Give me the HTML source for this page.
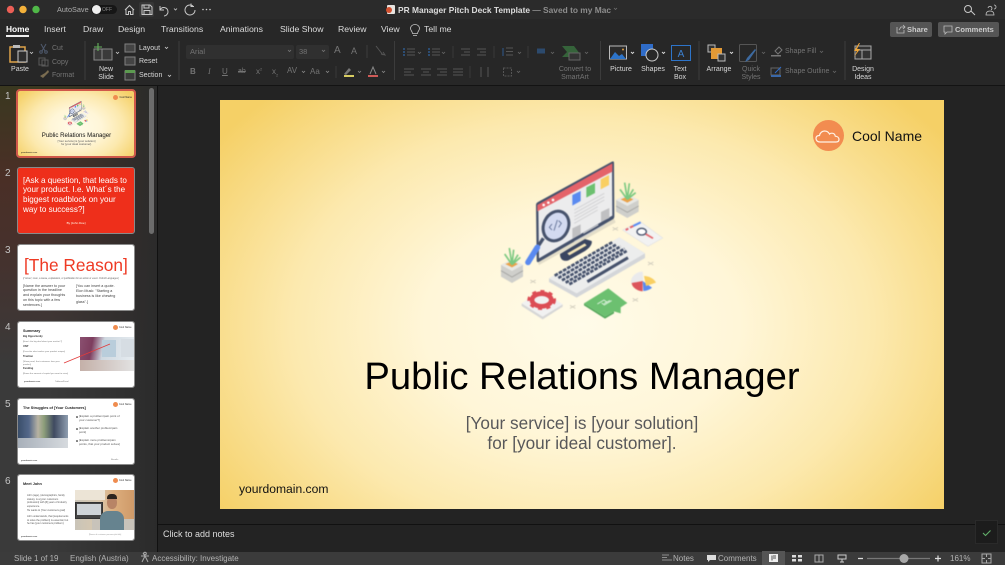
<!DOCTYPE html>
<html><head><meta charset="utf-8"><style>
*{box-sizing:border-box}
html,body{margin:0;padding:0;width:1005px;height:565px;overflow:hidden;background:#232323;font-family:"Liberation Sans",sans-serif}
#root{position:absolute;left:0;top:0;width:1005px;height:565px;overflow:hidden;filter:blur(.35px)}
.a{position:absolute}
.t{position:absolute;white-space:nowrap;line-height:10px;font-size:7px;color:#d8d8d8}
.c{transform:translateX(-50%);text-align:center}
.d{color:#747474}
.tab{font-size:8.7px;color:#dcdcdc;top:23.5px}
.st{font-size:8px;color:#b4b4b4;top:553.5px}
.th{position:absolute;left:18px;width:116px;background:#fff;border-radius:2px;overflow:hidden;outline:1px solid #8a8a8a}
.num{position:absolute;left:5px;font-size:10px;color:#c4c4c4;line-height:12px}
.th .t{color:#333}
</style></head><body><div id="root">

<div class="a" style="left:0;top:0;width:1005px;height:19px;background:#2b2b2b"></div>
<div class="a" style="left:0;top:19px;width:1005px;height:66px;background:#272727"></div>
<div class="a" style="left:0;top:85px;width:1005px;height:1px;background:#131313"></div>

<!-- sidebar -->
<div class="a" style="left:0;top:86px;width:157px;height:466px;background:linear-gradient(90deg,rgba(40,40,40,0) 30%,#2b2b2b 100%),linear-gradient(180deg,#3a3820 0,#4a2f26 90px,#47302b 150px,#3a3a3a 280px,#3a3a3a 100%)"></div>
<div class="a" style="left:157px;top:86px;width:1px;height:466px;background:#111"></div>
<div class="a" style="left:149px;top:88px;width:5px;height:146px;border-radius:3px;background:#6c6c6c"></div>

<!-- status bar -->
<div class="a" style="left:0;top:552px;width:1005px;height:13px;background:#3b3b3b"></div>
<div class="a" style="left:762px;top:551px;width:23px;height:14px;background:#555"></div>
<!-- notes -->
<div class="a" style="left:158px;top:524px;width:847px;height:1px;background:#111"></div>
<div class="t" style="left:163px;top:529px;font-size:9px;color:#dedede">Click to add notes</div>
<div class="a" style="left:975px;top:520px;width:23px;height:24px;background:#1c1c1c;border:1px solid #2a2a2a"></div>

<!-- title bar text -->
<div class="t" style="left:57px;top:4.500px;font-size:7.300px;color:#ababab">AutoSave</div>
<div class="a" style="left:91px;top:5px;width:26px;height:9px;border-radius:5px;background:#161616"></div>
<div class="a" style="left:92px;top:5px;width:9px;height:9px;border-radius:5px;background:#f0f0f0"></div>
<div class="t" style="left:102px;top:4.500px;font-size:5px;color:#888">OFF</div>
<div class="a" style="left:139px;top:2px;width:15px;height:15px;background:#363636;border-radius:2px"></div>
<div class="t" style="left:398px;top:5px;font-size:8.400px;font-weight:bold;color:#dcdcdc">PR Manager Pitch Deck Template <span style="color:#8d8d8d">— Saved to my Mac</span></div>

<!-- tabs -->
<div class="t tab" style="left:6px;color:#fff;font-weight:bold;font-size:8.400px">Home</div>
<div class="a" style="left:6px;top:35px;width:23px;height:1.500px;background:#eee"></div>
<div class="t tab" style="left:44px">Insert</div>
<div class="t tab" style="left:83px">Draw</div>
<div class="t tab" style="left:118px">Design</div>
<div class="t tab" style="left:161px">Transitions</div>
<div class="t tab" style="left:220px">Animations</div>
<div class="t tab" style="left:280px">Slide Show</div>
<div class="t tab" style="left:338px">Review</div>
<div class="t tab" style="left:381px">View</div>
<div class="t tab" style="left:424px">Tell me</div>

<!-- share/comments -->
<div class="a" style="left:890px;top:22px;width:42px;height:15px;background:#555;border-radius:2px"></div>
<div class="t" style="left:907px;top:25px;font-size:7.500px;font-weight:bold;color:#ccc">Share</div>
<div class="a" style="left:938px;top:22px;width:61px;height:15px;background:#555;border-radius:2px"></div>
<div class="t" style="left:955px;top:25px;font-size:7.500px;font-weight:bold;color:#ccc">Comments</div>

<!-- ribbon labels -->
<div class="t c" style="left:20px;top:64.500px">Paste</div>
<div class="t d" style="left:52px;top:43.500px">Cut</div>
<div class="t d" style="left:52px;top:57.500px">Copy</div>
<div class="t d" style="left:52px;top:71px">Format</div>
<div class="t c" style="left:106px;top:66px;line-height:7.600px">New<br>Slide</div>
<div class="t" style="left:139px;top:43.500px">Layout</div>
<div class="t" style="left:139px;top:57px">Reset</div>
<div class="t" style="left:139px;top:71px">Section</div>
<div class="a" style="left:186px;top:45px;width:108px;height:14px;background:#303030;border-radius:2px"></div>
<div class="t d" style="left:190px;top:47px;font-size:7.500px">Arial</div>
<div class="a" style="left:296px;top:45px;width:33px;height:14px;background:#303030;border-radius:2px"></div>
<div class="t d" style="left:299px;top:47px;font-size:7.500px">38</div>
<div class="t c d" style="left:575px;top:66px;line-height:7.600px">Convert to<br>SmartArt</div>
<div class="t c" style="left:621px;top:64.500px">Picture</div>
<div class="t c" style="left:653px;top:64.500px">Shapes</div>
<div class="t c" style="left:680px;top:66px;line-height:7.600px">Text<br>Box</div>
<div class="t c" style="left:719px;top:64.500px">Arrange</div>
<div class="t c d" style="left:751px;top:66px;line-height:7.600px">Quick<br>Styles</div>
<div class="t d" style="left:785px;top:47px">Shape Fill</div>
<div class="t d" style="left:785px;top:67px">Shape Outline</div>
<div class="t c" style="left:863px;top:66px;line-height:7.600px">Design<br>Ideas</div>
<div class="t d" style="left:190px;top:67px;font-size:8px;font-weight:bold">B</div>
<div class="t d" style="left:208px;top:67px;font-size:8px;font-style:italic;font-family:'Liberation Serif',serif">I</div>
<div class="t d" style="left:222px;top:67px;font-size:8px;text-decoration:underline">U</div>
<div class="t d" style="left:238px;top:67px;font-size:7px;text-decoration:line-through">ab</div>
<div class="t d" style="left:256px;top:67px;font-size:8px">x<sup style="font-size:4px;line-height:0">2</sup></div>
<div class="t d" style="left:272px;top:67px;font-size:8px">x<sub style="font-size:4px;line-height:0">2</sub></div>
<div class="t d" style="left:287px;top:66px;font-size:8px">AV</div>
<div class="t d" style="left:310px;top:67px;font-size:8px">Aa</div>
<div class="t d" style="left:334px;top:46px;font-size:10px">A</div>
<div class="t d" style="left:351px;top:46px;font-size:9px">A</div>

<!-- status text -->
<div class="t st" style="left:14px">Slide 1 of 19</div>
<div class="t st" style="left:70px">English (Austria)</div>
<div class="t st" style="left:152px">Accessibility: Investigate</div>
<div class="t st" style="left:673px">Notes</div>
<div class="t st" style="left:718px">Comments</div>
<div class="t st" style="left:950px">161%</div>

<!-- chrome icons -->
<svg class="a" style="left:0;top:0" width="1005" height="565" viewBox="0 0 1005 565" fill="none">
<circle cx="10.500" cy="9.500" r="3.700" fill="#ec5f56"/><circle cx="23" cy="9.500" r="3.700" fill="#f3b13a"/><circle cx="36" cy="9.500" r="3.700" fill="#50b848"/>
<g stroke="#c8c8c8" stroke-width="1">
<path d="M125 10l4.500-4.500 4.500 4.500M126 9.500v5h2.500v-3h2v3h2.500v-5"/>
<path d="M142 5h8l2 2v7.500h-10zM144 5v3h5V5M144 14.500v-4h6v4"/>
<path d="M160 6v4h4M160 10c2-4 8-3 8 2 0 2-2 4-4 4"/>
<path d="M174 8.500l1.500 1.500 1.500-1.500" stroke-width=".8"/>
<path d="M193 6a5 5 0 1 0 2 4M191 3.500v3h3"/>
<path d="M968 5.500a3.500 3.500 0 1 1 0 7 3.500 3.500 0 0 1 0-7zM971 11l4 4"/>
<path d="M988 8a2 2 0 1 1 3 2M994 5a2 2 0 1 1 0 4M986 15c0-3 2-4 4-4s4 1 4 4z" stroke-width=".8"/>
<path d="M415 27c-3 0 -4.500 2-4.500 4 0 2 2 3 2 5h5c0-2 2-3 2-5 0-2-1.500-4-4.500-4zM413 38h4" stroke-width=".8" transform="translate(0,-2.500)"/>
<path d="M614 8l1.500 1.500 1.500-1.500" stroke="#777" stroke-width=".7"/>
<path d="M897 27v6h7v-3M899 30l2-3 4 0M903 25l2 2-2 2" stroke-width=".8" stroke="#bbb"/>
<path d="M944 26h8v6h-5l-2 2v-2h-1z" stroke-width=".8" stroke="#bbb"/>
</g>
<circle cx="203" cy="9.500" r=".8" fill="#ccc"/><circle cx="206.500" cy="9.500" r=".8" fill="#ccc"/><circle cx="210" cy="9.500" r=".8" fill="#ccc"/>
<rect x="387" y="5" width="8" height="9" rx="1" fill="#e8e4e0"/><circle cx="389" cy="10" r="3" fill="#d2502f"/>
<!-- paste -->
<rect x="10" y="47" width="15" height="15" stroke="#dda34a" stroke-width="1.500"/><rect x="18" y="51" width="9" height="11" fill="#2d2d2d" stroke="#ccc"/><rect x="13" y="45" width="7" height="3" fill="#bbb"/>
<path d="M30 52l1.500 1.500 1.500-1.500" stroke="#ccc" stroke-width=".8"/>
<path d="M41 44l4 7M46 44l-4 7" stroke="#4f5a6e"/><circle cx="41" cy="52" r="1.300" stroke="#4f5a6e"/><circle cx="46" cy="52" r="1.300" stroke="#4f5a6e"/>
<path d="M39 58h6v7h-6zM42 60h6v6h-6z" stroke="#5a5a5a"/>
<path d="M40 76l5-3 3-3 1 2-3 3-3 3z" fill="#7a6c50"/>
<!-- new slide -->
<rect x="94" y="49" width="18" height="11" stroke="#888" fill="#3a3a3a"/><path d="M102 49v11" stroke="#888"/><path d="M98 43v8M94 47h8" stroke="#65b25c" stroke-width="1.100"/>
<path d="M116 52l1.500 1.500 1.500-1.500" stroke="#ccc" stroke-width=".8"/>
<rect x="125" y="44" width="10" height="8" fill="#444" stroke="#808080"/><rect x="125" y="57" width="10" height="8" fill="#444" stroke="#808080"/><rect x="125" y="71" width="10" height="9" fill="#3a3a3a" stroke="#808080"/><rect x="125" y="70" width="10" height="3" fill="#5c9a50"/>
<path d="M165 47l1.500 1.500 1.500-1.500M168 75l1.500 1.500 1.500-1.500" stroke="#ccc" stroke-width=".8"/>
<path d="M288 50l1.500 1.500 1.500-1.500M322 50l1.500 1.500 1.500-1.500" stroke="#777" stroke-width=".8"/>
<path d="M367 45v13" stroke="#3e3e3e"/>
<path d="M376 46l7 9M381 54l4 1-2-3" stroke="#555"/>
<!-- separators -->
<path d="M85 41v39M179 41v39M394.500 41v39M600.500 41v39M699 41v39M845 41v39" stroke="#3c3c3c"/>
<path d="M336 66v12M470 66v12M453 46v12M494 46v12M528 46v12" stroke="#3a3a3a"/>
<!-- highlight / font colour -->
<path d="M344 74l5-6 2 2-5 5z" fill="#777"/><rect x="344" y="75" width="10" height="2" fill="#d8cd62"/><rect x="368" y="75" width="10" height="2" fill="#cf5b58"/>
<path d="M370 74l3-7 3 7" stroke="#888"/>
<path d="M358 71l1.500 1.500 1.500-1.500M382 71l1.500 1.500 1.500-1.500M302 71l1.500 1.500 1.500-1.500M326 71l1.500 1.500 1.500-1.500" stroke="#888" stroke-width=".8"/>
<!-- lists -->
<g stroke="#555"><path d="M407 49h8M407 52h8M407 55h8M432 49h8M432 52h8M432 55h8M461 49h9M464 52h6M461 55h9M477 49h9M480 52h6M477 55h9M506 48h7M506 51.500h7M506 55h7"/>
<path d="M404 69h10M404 72h7M404 75h10M421 69h10M423 72h6M421 75h10M437 69h10M440 72h7M437 75h10M453 69h10M453 72h10M453 75h10"/>
<path d="M481 67v10M488 67v10"/><rect x="503.500" y="68" width="8" height="8" stroke-dasharray="2 1"/></g>
<g fill="#2f5a8c"><circle cx="404" cy="49" r="1"/><circle cx="404" cy="52" r="1"/><circle cx="404" cy="55" r="1"/><circle cx="429" cy="49" r="1"/><circle cx="429" cy="52" r="1"/><circle cx="429" cy="55" r="1"/><rect x="537" y="48.500" width="8" height="5" opacity=".7"/><path d="M503 48v8" stroke="#2f5a8c"/></g>
<path d="M418 52l1.500 1.500 1.500-1.500M442 52l1.500 1.500 1.500-1.500M518 52l1.500 1.500 1.500-1.500M551 52l1.500 1.500 1.500-1.500M585 52l1.500 1.500 1.500-1.500M517 71l1.500 1.500 1.500-1.500" stroke="#666" stroke-width=".8"/>
<!-- smartart -->
<path d="M562 46h12l6 8-6 3h-12l5-5z" fill="#35633a"/><rect x="569" y="53" width="11" height="7" fill="#333" stroke="#666"/>
<!-- picture -->
<rect x="609.500" y="46" width="17" height="13" fill="#2b2b2b" stroke="#bbb"/><path d="M610 59l5-7 4 4 3-2 4 5z" fill="#2d74c9"/><circle cx="623" cy="49.500" r="1" fill="#e0a040"/>
<path d="M631 52l1.500 1.500 1.500-1.500M662 52l1.500 1.500 1.500-1.500M730 52l1.500 1.500 1.500-1.500" stroke="#ddd" stroke-width=".9"/>
<!-- shapes -->
<rect x="641" y="44" width="12" height="12" fill="#2f6cc8"/><circle cx="652" cy="55" r="6" fill="#282828" stroke="#ccc"/>
<!-- text box -->
<rect x="671.500" y="45.500" width="19" height="15" stroke="#2d74c9"/><text x="681" y="57" text-anchor="middle" font-size="10" fill="#3c80d0" font-family="Liberation Sans">A</text>
<!-- arrange -->
<rect x="708" y="45" width="7" height="7" fill="#333" stroke="#bbb"/><rect x="711" y="48" width="11" height="11" fill="#e39a36"/><rect x="718" y="54" width="7" height="7" fill="#333" stroke="#bbb"/>
<!-- quick styles -->
<rect x="739.500" y="44.500" width="17" height="17" rx="1" stroke="#555"/><path d="M745 62l2-4 8-9 1 1-7 10z" fill="#3d6aa0"/>
<path d="M762 52l1.500 1.500 1.500-1.500M820 51l1.500 1.500 1.500-1.500M833 71l1.500 1.500 1.500-1.500" stroke="#666" stroke-width=".8"/>
<!-- fill/outline -->
<path d="M775 51l4-4 3 3-4 4z" stroke="#777"/><rect x="771" y="55" width="10" height="1.500" fill="#777"/>
<rect x="771" y="68" width="9" height="7" stroke="#666"/><path d="M775 73l6-6" stroke="#2f6cc8"/><rect x="771" y="75" width="10" height="2" fill="#3a68a8"/>
<!-- design ideas -->
<rect x="855" y="46" width="16" height="13" stroke="#aaa" fill="#333"/><path d="M855 50h16M862 50v9" stroke="#aaa"/><path d="M859 43l-5 8h3l-3 6 6-8h-3l3-6z" fill="#eea63a"/>
<!-- status icons -->
<path d="M143 553l2 3-3 6M145 556l3 6M141 556h8" stroke="#aaa"/><circle cx="145" cy="553.500" r="1.300" stroke="#aaa"/>
<path d="M662 555h5M662 557.500h5M662 560h10M665 555h4M663 560h9" stroke="#aaa" stroke-width=".8"/>
<path d="M707 555h9v5h-6l-2 2v-2h-1z" fill="#ddd"/>
<rect x="769" y="554" width="9" height="8" fill="#eee"/><path d="M772 555.500v5M773 556h3M773 558h3" stroke="#555"/>
<rect x="792" y="555" width="4" height="2.500" fill="#ddd"/><rect x="798" y="555" width="4" height="2.500" fill="#ddd"/><rect x="792" y="559" width="4" height="2.500" fill="#ddd"/><rect x="798" y="559" width="4" height="2.500" fill="#ddd"/>
<path d="M815 555h8v7h-8zM819 555v7" stroke="#aaa"/>
<path d="M838 555h8v4h-8zM842 559v3M840 562h4" stroke="#ccc"/>
<path d="M858 558.500h5M935 558.500h6M938 555.500v6" stroke="#ddd" stroke-width="1.200"/>
<path d="M867 558.500h63" stroke="#777" stroke-width="1.300"/><circle cx="904" cy="558.500" r="4.500" fill="#a8a8a8"/>
<path d="M982 554h9v9h-9zM982 558.500h3M988 558.500h3M986.500 554v3M986.500 560v3" stroke="#aaa"/>
<path d="M983 533l2.500 2.500 5-5" stroke="#62b06b" stroke-width="1.100"/>
</svg>

<!-- illustration symbol -->
<svg width="0" height="0" style="position:absolute"><symbol id="ill" viewBox="0 0 600 540">
<path d="M172 335L402 205l5 12-230 128z" fill="#d9d3c0" opacity=".7"/>
<path d="M240 312l75-45 20 6c3 10-8 22-20 30l-50 28c-12 4-25 0-25-19z" fill="#3a4560"/>
<path d="M262 310l52-30 6 6-52 30z" fill="#f4e5b8"/>
<path d="M168 165q0-6 6-9L396 35q6-3 6 4l1 160q0 6-5 9L178 335q-8 4-8-4z" fill="#46526c"/>
<path d="M175 168L396 42l1 155L177 325z" fill="#ececed"/>
<path d="M172 165L397 40v25L172 184z" fill="#e4636a"/>
<circle cx="191" cy="165" r="4" fill="#fff"/><circle cx="205" cy="158" r="4" fill="#fff"/><circle cx="219" cy="150" r="4" fill="#fff"/>
<path d="M277 135l25-12v30l-25 14z" fill="#5a8af0"/><path d="M319 112l26-13v30l-26 14z" fill="#6cc070"/><path d="M362 88l25-13v30l-25 13z" fill="#f9cf62"/>
<path d="M363 186l25-12v30l-25 12zM277 235l25-12v30l-25 13z" fill="#c0c0c2"/>
<path d="M283 180l90-50M283 190l90-50M283 200l90-50M283 210l70-40M283 220l70-40M283 275l90-50M310 250l45-26" stroke="#d2d2d4" stroke-width="3" fill="none"/>
<path d="M190 265l-45 68" stroke="#46526c" stroke-width="10" fill="none"/>
<path d="M172 292l-28 45" stroke="#5a8af0" stroke-width="17" stroke-linecap="round" fill="none"/>
<ellipse cx="228" cy="228" rx="37" ry="46" transform="rotate(25 228 228)" fill="#d3daf0" stroke="#46526c" stroke-width="9"/>
<path d="M216 222l-8 10 8 8M236 212l8 8-8 12M232 210l-10 32" stroke="#5a6a90" stroke-width="2.500" fill="none"/>
<path d="M207 385L418 262l77 48v14L290 443l-83-47z" fill="#d4d6d9"/>
<path d="M207 385L418 262l77 48-205 120z" fill="#eceded"/>
<g stroke="#46526c" stroke-width="8" stroke-dasharray="11 3.500" fill="none"><path d="M224 377L398 276M235 384L410 283M246 391L422 289M257 398L434 296"/><path d="M268 403L440 303"/></g>
<path d="M322 395l122-72" stroke="#46526c" stroke-width="9" fill="none"/>
<path d="M63 345l33-17 33 17v35l-33 19-33-19z" fill="#cfcfcb"/><path d="M63 345l33-17 33 17-33 18z" fill="#e8e8e4"/><path d="M63 362l33 19 33-19" stroke="#a9a9a6" stroke-width="3" fill="none"/>
<path d="M76 342l20-8 18 8-18 10z" fill="#eba24a"/>
<path d="M96 344l-22-32M96 344l-8-50M96 344l5-45M96 344l18-30M96 344l25-22" stroke="#7cc981" stroke-width="5" fill="none"/>
<path d="M408 150l34-17 34 17v35l-34 19-34-19z" fill="#cfcfcb"/><path d="M408 150l34-17 34 17-34 18z" fill="#e8e8e4"/><path d="M408 168l34 19 34-19" stroke="#a9a9a6" stroke-width="3" fill="none"/>
<path d="M422 148l20-8 18 8-18 10z" fill="#eba24a"/>
<path d="M442 148l-22-30M442 148l-8-50M442 148l6-48M442 148l18-30M442 148l25-20" stroke="#7cc981" stroke-width="5" fill="none"/>
<path d="M428 240l52-26 68 50-44 25z" fill="#f2f2f2" stroke="#e2e2e2" stroke-width="2"/>
<path d="M437 240l8-4M450 233l10-5" stroke="#e4636a" stroke-width="6" fill="none"/><path d="M460 228l22-11" stroke="#5a8af0" stroke-width="6" fill="none"/>
<ellipse cx="485" cy="245" rx="14" ry="10" fill="#fff" stroke="#46526c" stroke-width="4"/><path d="M497 252l22 13" stroke="#e4636a" stroke-width="5" fill="none"/>
<path d="M453 395c0-18 18-30 35-30l2 28-37 7z" fill="#eaeaec"/>
<path d="M488 393l-33 6c1 14 18 24 33 25z" fill="#dc555c"/><path d="M488 393l2 30c10 0 20-4 26-10z" fill="#5a8af0"/><path d="M492 378c15 0 30 8 36 20l-30 10z" fill="#f9cf62"/>
<path d="M125 460l60-40 63 43-60 37z" fill="#f1f1f1"/><path d="M125 460v8l63 40 60-38v-7l-60 37z" fill="#d6d6d6"/>
<ellipse cx="185" cy="450" rx="29" ry="19" stroke="#dc4c54" stroke-width="14" fill="none"/>
<ellipse cx="185" cy="450" rx="39" ry="26" stroke="#dc4c54" stroke-width="8" stroke-dasharray="12 13" fill="none"/>
<path d="M312 460l73-45 57 44-20 13v18l-20-6-27 16z" fill="#6cc070"/><path d="M312 460v6l63 40 27-16v-6l-27 16z" fill="#55a85c"/>
<path d="M352 462l20-12 8 6-8 5 18-10M395 452l-22 13-8-6" stroke="#e4f5e4" stroke-width="2.500" fill="none"/>
<g stroke="#d0ccbc" stroke-width="2.500" fill="none"><path d="M398 232l16 9M414 232l-16 9M504 336l16 9M520 336l-16 9M151 390l16 9M167 390l-16 9M458 445l16 9M474 445l-16 9M270 466l16 9M286 466l-16 9"/></g>
</symbol></svg>

<!-- thumbnails -->
<div class="num" style="top:91px">1</div><div class="num" style="top:168px">2</div><div class="num" style="top:245px">3</div><div class="num" style="top:322px">4</div><div class="num" style="top:399px">5</div><div class="num" style="top:476px">6</div>

<div class="a" style="left:16px;top:89px;width:120px;height:69px;border:2px solid #d0584a;border-radius:4px"></div>
<div class="th" style="top:91px;height:65px;outline:none;background:radial-gradient(ellipse 62% 78% at 50% 55%,#fffbe9 0,#fff6d8 35%,#fce9ae 65%,#f5d066 100%)">
 <svg class="a" style="left:42px;top:8px;filter:blur(.3px)" width="32" height="29"><use href="#ill" width="32" height="29"/></svg>
 <div class="a" style="left:95px;top:4px;width:5px;height:5px;border-radius:50%;background:#ef8c4f"></div>
 <div class="t" style="left:101.500px;top:1.500px;font-size:2.500px;color:#222">Cool Name</div>
 <div class="t c" style="left:58.500px;top:40px;font-size:6.100px;color:#111">Public Relations Manager</div>
 <div class="t c" style="left:58.500px;top:49px;font-size:2.800px;line-height:3.400px;color:#555">[Your service] is [your solution]<br>for [your ideal customer].</div>
 <div class="t" style="left:3px;top:57px;font-size:2.200px;color:#111">yourdomain.com</div>
</div>

<div class="th" style="top:168px;height:65px;background:#ee2f1b">
 <div class="t" style="left:5px;top:7.500px;font-size:8.100px;line-height:9.900px;color:#fff">[Ask a question, that leads to<br>your product. I.e. What´s the<br>biggest roadblock on your<br>way to success?]</div>
 <div class="t c" style="left:58px;top:50px;font-size:3px;color:#ffe">By [John Doe]</div>
</div>

<div class="th" style="top:245px;height:65px">
 <div class="t" style="left:6px;top:9.500px;font-size:17.300px;line-height:20px;color:#ee3a24">[The Reason]</div>
 <div class="t" style="left:5px;top:28.500px;font-size:2.300px;color:#666">[/ˈrēzən/, noun, a cause, explanation, or justification for an action or event. Oxford Languages ]</div>
 <div class="t" style="left:5px;top:38.500px;font-size:3.700px;line-height:4.900px;color:#444">[Name the answer to your<br>question in the headline<br>and explain your thoughts<br>on this topic with a few<br>sentences.]</div>
 <div class="t" style="left:58px;top:39px;font-size:3.700px;line-height:5.200px;color:#444">[You can insert a quote.<br>Elon Musk: "Starting a<br>business is like chewing<br>glass".]</div>
</div>

<div class="th" style="top:322px;height:65px">
 <div class="t" style="left:5px;top:4px;font-size:3.800px;font-weight:bold;color:#222">Summary</div>
 <div class="t" style="left:5px;top:10px;font-size:2.600px;font-weight:bold">Big Opportunity</div>
 <div class="t" style="left:5px;top:15px;font-size:2.200px;color:#777">[How's the big deal about your market ?]</div>
 <div class="t" style="left:5px;top:20px;font-size:2.600px;font-weight:bold">USP</div>
 <div class="t" style="left:5px;top:25px;font-size:2.200px;color:#777">[Describe what makes your product unique]</div>
 <div class="t" style="left:5px;top:30px;font-size:2.600px;font-weight:bold">Traction</div>
 <div class="t" style="left:5px;top:35px;font-size:2.200px;color:#777">[Show proof, that customers love your</div>
 <div class="t" style="left:5px;top:38px;font-size:2.200px;color:#777">product]</div>
 <div class="t" style="left:5px;top:42px;font-size:2.600px;font-weight:bold">Funding</div>
 <div class="t" style="left:5px;top:47px;font-size:2.200px;color:#777">[Name the amount of capital you want to raise]</div>
 <div class="t" style="left:6px;top:55px;font-size:2.200px;color:#111">yourdomain.com</div>
 <div class="t" style="left:37px;top:55px;font-size:2.200px;color:#777">Tableau/Excel</div>
 <div class="a" style="left:62px;top:15px;width:54px;height:34px;background:linear-gradient(100deg,#8a5070 0,#7d3d5e 22%,#cfd8e0 42%,#e8eef2 100%)"></div>
 <div class="a" style="left:84px;top:18px;width:14px;height:17px;background:#b9cddb"></div>
 <div class="a" style="left:103px;top:17px;width:13px;height:18px;background:#d6dde3"></div>
 <div class="a" style="left:62px;top:38px;width:54px;height:11px;background:linear-gradient(90deg,#c4b0a8,#e2e2e2)"></div>
 <svg class="a" style="left:45px;top:20px" width="50" height="22"><path d="M1 21L47 2" stroke="#e23b3b" stroke-width=".8"/></svg>
 <div class="a" style="left:95px;top:3px;width:5px;height:5px;border-radius:50%;background:#ef8c4f"></div>
 <div class="t" style="left:101px;top:.500px;font-size:2.500px">Cool Name</div>
</div>

<div class="th" style="top:399px;height:65px">
 <div class="t" style="left:5px;top:4px;font-size:3.800px;font-weight:bold;color:#222">The Struggles of [Your Customers]</div>
 <div class="a" style="left:0;top:16px;width:50px;height:33px;background:linear-gradient(90deg,#3a4e6a 0,#54688a 22%,#b7b2a2 40%,#8d9e7a 52%,#3f4a60 72%,#8f9eb0 100%)"></div>
 <div class="a" style="left:0;top:39px;width:50px;height:10px;background:linear-gradient(90deg,#a8b0ba,#d6dade)"></div>
 <div class="t" style="left:61px;top:16px;font-size:2.900px;line-height:3.800px;color:#555">[Explain a problem/pain point of<br>your customer?]</div>
 <div class="t" style="left:61px;top:28px;font-size:2.900px;line-height:3.800px;color:#555">[Explain another problem/pain<br>point]</div>
 <div class="t" style="left:61px;top:40px;font-size:2.900px;line-height:3.800px;color:#555">[Explain more problems/pain<br>points, that your product solves]</div>
 <div class="a" style="left:58px;top:17px;width:1.500px;height:1.500px;background:#777;border-radius:50%"></div>
 <div class="a" style="left:58px;top:29px;width:1.500px;height:1.500px;background:#777;border-radius:50%"></div>
 <div class="a" style="left:58px;top:41px;width:1.500px;height:1.500px;background:#777;border-radius:50%"></div>
 <div class="t" style="left:3px;top:57px;font-size:2.200px;color:#111">yourdomain.com</div>
 <div class="t" style="left:93px;top:56px;font-size:2.200px;color:#777">Results</div>
 <div class="a" style="left:95px;top:3px;width:5px;height:5px;border-radius:50%;background:#ef8c4f"></div>
 <div class="t" style="left:101px;top:.500px;font-size:2.500px">Cool Name</div>
</div>

<div class="th" style="top:475px;height:65px">
 <div class="t" style="left:5px;top:4px;font-size:3.800px;font-weight:bold;color:#222">Meet John</div>
 <div class="t" style="left:9px;top:19px;font-size:2.500px;line-height:3.600px;color:#555">John (age), (demographics, family<br>status), is a [your customers<br>profession] with [#] years of industry<br>experience.</div>
 <div class="t" style="left:9px;top:31px;font-size:2.500px;color:#555">He wants to [Your customers goal]</div>
 <div class="t" style="left:9px;top:40px;font-size:2.500px;line-height:3.600px;color:#555">John understands, that [requirements<br>to solve the problem] is essential, but<br>he has [your customers problem].</div>
 <div class="t" style="left:3px;top:57px;font-size:2.200px;color:#111">yourdomain.com</div>
 <div class="a" style="left:57px;top:15px;width:59px;height:40px;background:linear-gradient(90deg,#c9c4b8 0,#d9c9b0 40%,#dcae7e 65%,#cf9a68 100%)"></div>
 <div class="a" style="left:57px;top:15px;width:30px;height:10px;background:#ece4d6"></div>
 <div class="a" style="left:57px;top:27px;width:28px;height:17px;background:#444;border:1px solid #333"></div>
 <div class="a" style="left:59px;top:29px;width:24px;height:11px;background:#cfd4d8"></div>
 <div class="a" style="left:74px;top:44px;width:42px;height:11px;background:#c8c3ba"></div>
 <div class="a" style="left:82px;top:36px;width:24px;height:19px;background:#66838f;border-radius:8px 8px 0 0"></div>
 <div class="a" style="left:89px;top:21px;width:10px;height:13px;background:#b88466;border-radius:45%"></div>
 <div class="a" style="left:89px;top:19px;width:10px;height:5px;background:#2d241e;border-radius:4px 4px 0 0"></div>
 <div class="t" style="left:71px;top:55px;font-size:2px;color:#999">[Name of customer persona job title]</div>
 <div class="a" style="left:95px;top:3px;width:5px;height:5px;border-radius:50%;background:#ef8c4f"></div>
 <div class="t" style="left:101px;top:.500px;font-size:2.500px">Cool Name</div>
</div>

<!-- main slide -->
<div class="a" style="left:220px;top:100px;width:724px;height:409px;background:radial-gradient(ellipse 62% 78% at 50% 55%,#fffbe9 0,#fff6d8 35%,#fce9ae 65%,#f5d066 100%);overflow:hidden">
 <div class="t" style="left:0;width:724px;text-align:center;top:256px;line-height:42px;font-size:38.200px;color:#000">Public Relations Manager</div>
 <div class="t" style="left:0;width:724px;text-align:center;top:313px;line-height:20px;font-size:17.200px;color:#58585a">[Your service] is [your solution]<br>for [your ideal customer].</div>
 <div class="t" style="left:19px;top:382px;line-height:14px;font-size:12.100px;color:#111">yourdomain.com</div>
 <div class="t" style="left:632px;top:27px;line-height:18px;font-size:14px;color:#111">Cool Name</div>
 <div class="a" style="left:592.500px;top:19.500px;width:31px;height:31px;border-radius:50%;background:#f28c50"></div>
 <svg class="a" style="left:592.500px;top:19.500px" width="31" height="31" viewBox="0 0 31 31" fill="none"><path d="M7 22c-2.500 0-4-1.500-4-3.500s1.500-3 3.500-3c.5-3 3-4.500 5-4.500 2.500 0 4 1 5 3 .7-.6 1.500-.8 2.300-.8 2 0 3.200 1.300 3.500 3 2 .2 3.700 1.400 3.700 3.200 0 1.700-1.300 2.600-3 2.600z" stroke="#fff3e6" stroke-width="1.200"/></svg>
</div>

<!-- illustration -->
<svg class="a" style="left:480px;top:150px;filter:blur(.4px)" width="200" height="180"><use href="#ill" width="200" height="180"/></svg>

</div></body></html>
